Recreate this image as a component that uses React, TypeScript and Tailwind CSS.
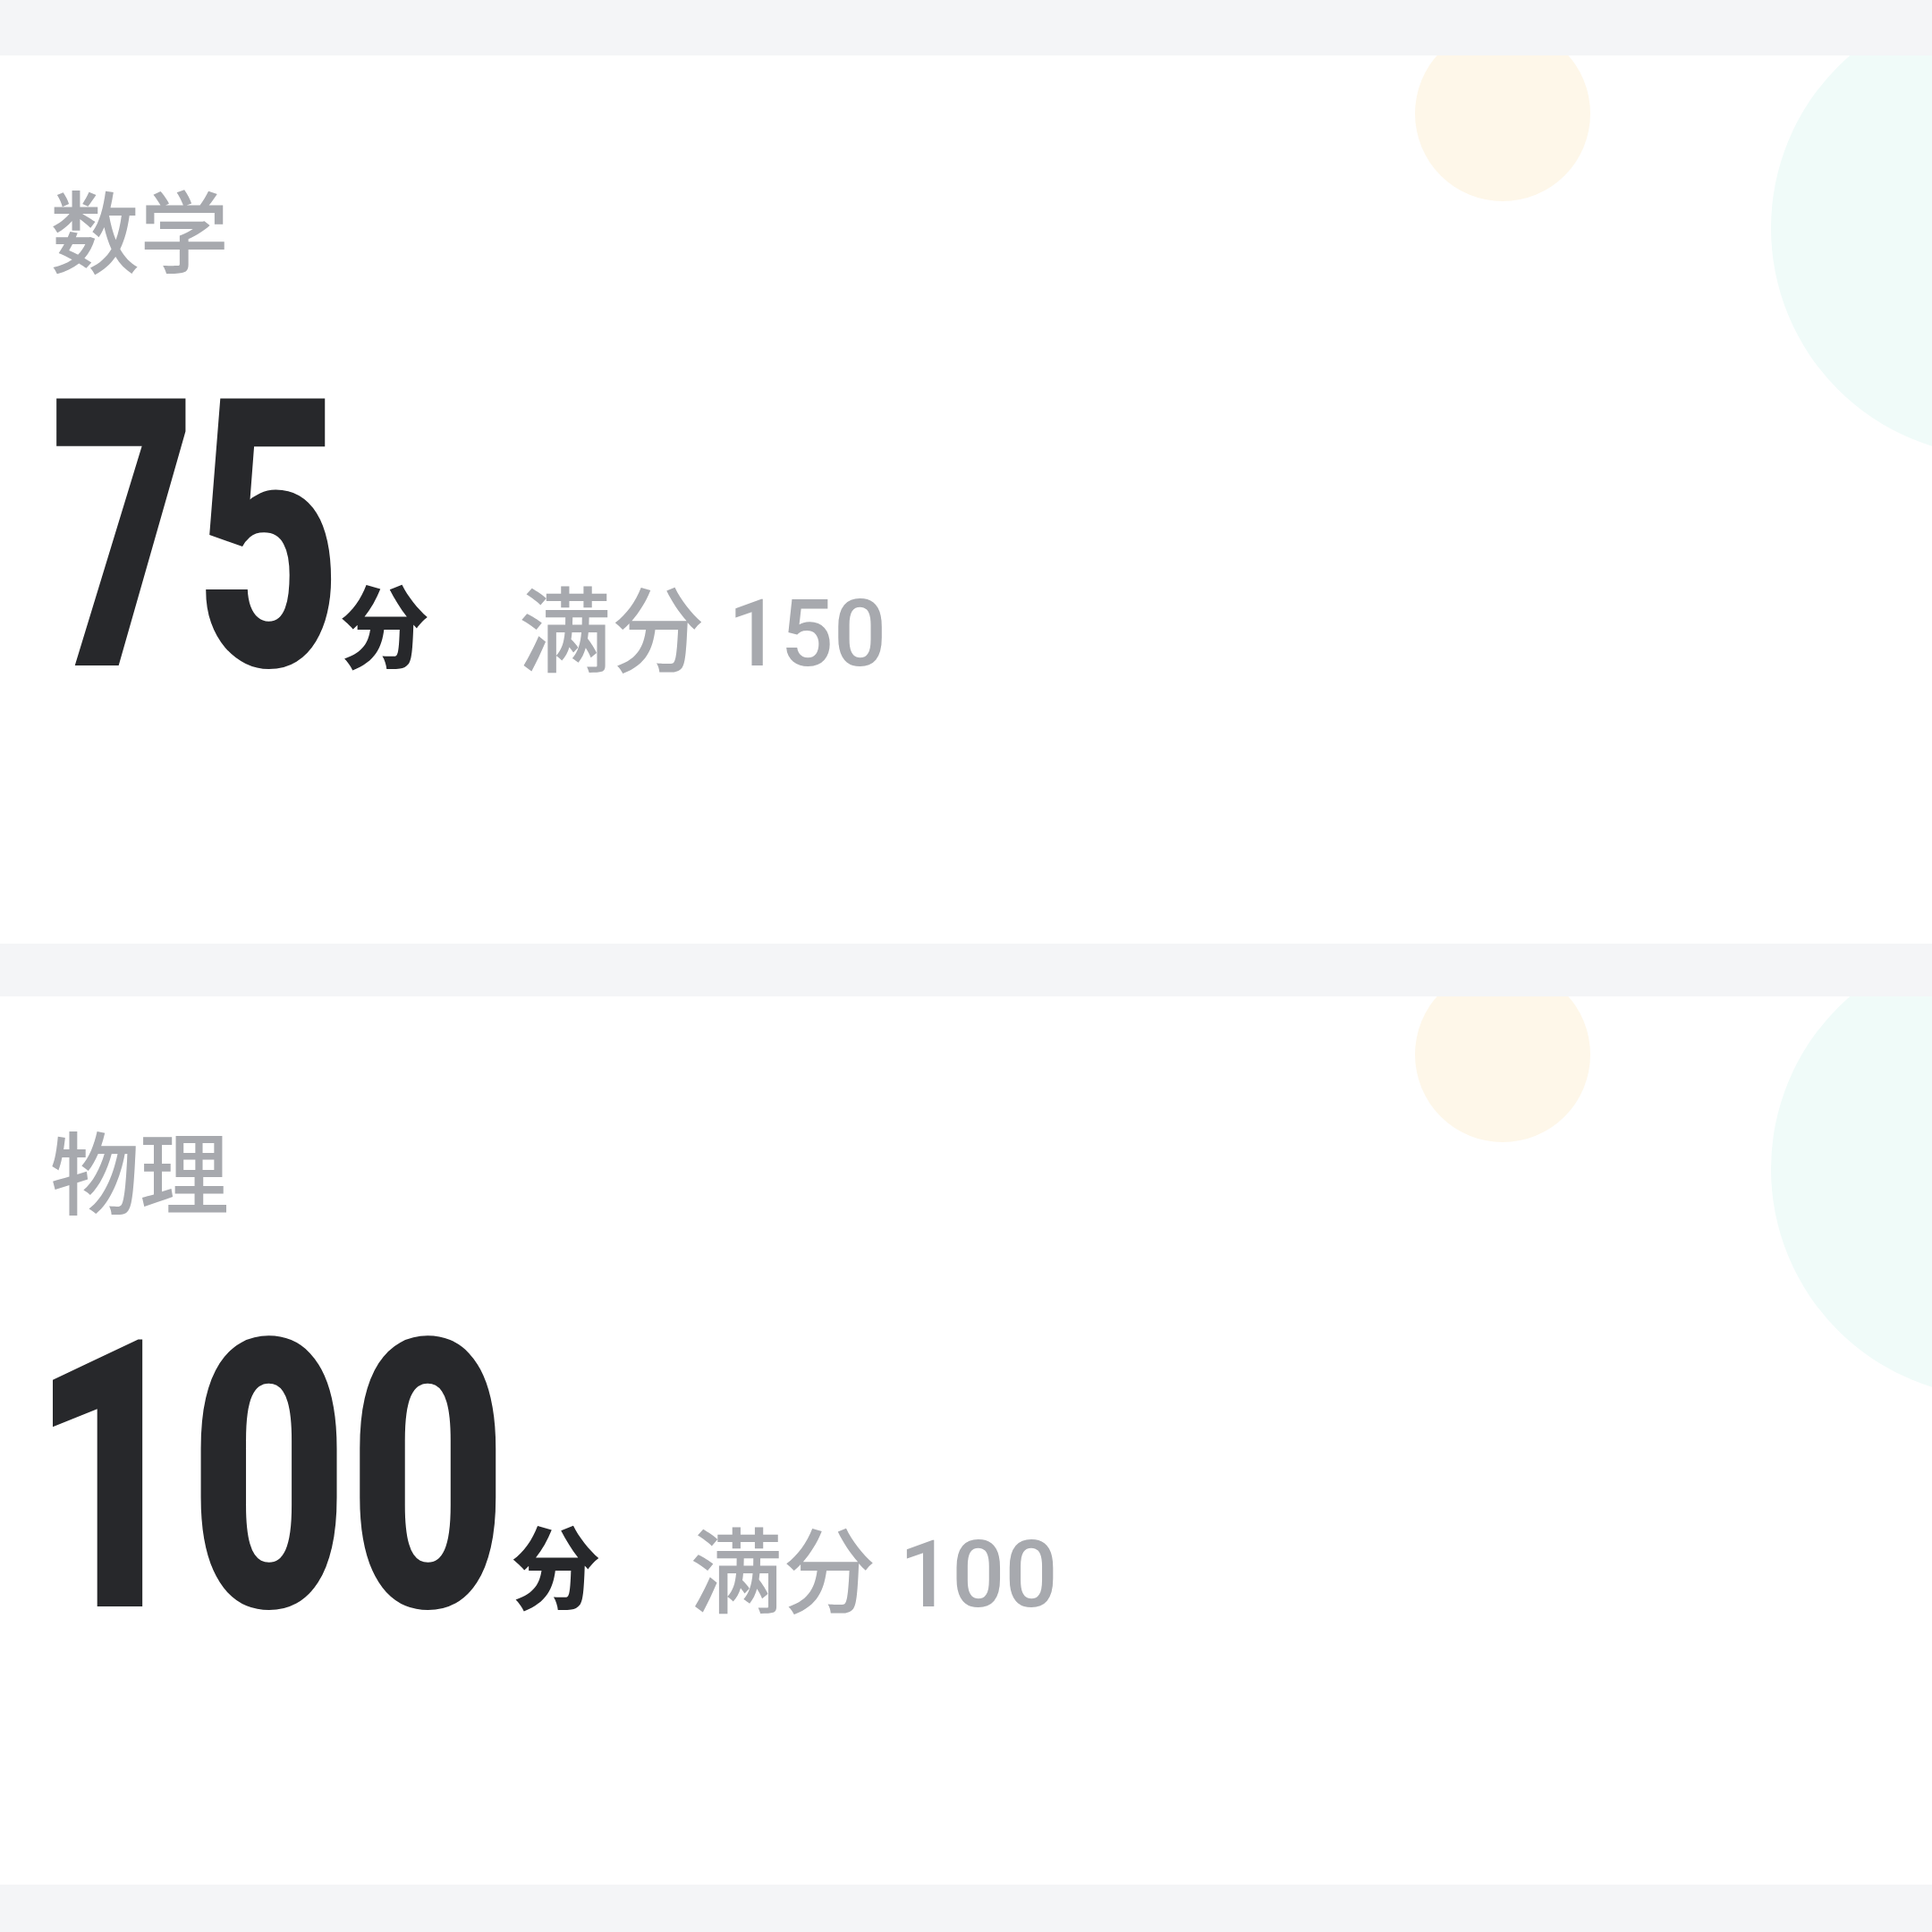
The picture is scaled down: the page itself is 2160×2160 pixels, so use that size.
import React from 'react'

type Score = {
  subject: string
  score: string
  full: string
  numClass: string
}

// the score font is a condensed face; Roboto is squeezed to match
const SCORES: Score[] = [
  { subject: '数学', score: '75', full: '150', numClass: 'scale-x-[0.67] mr-[-163px]' },
  { subject: '物理', score: '100', full: '100', numClass: 'scale-x-[0.73] ml-[-22px] mr-[-193px]' }
]

const ScoreCard: React.FC<{ item: Score }> = ({ item }) => {
  return (
    <div className="relative h-[993px] overflow-hidden bg-white pl-[56px] pt-[143px]">
      {/* decorative bubbles */}
      <div className="absolute left-[1582px] top-[-33px] h-[196px] w-[196px] rounded-full bg-[#fef7e9]" />
      <div className="absolute left-[1980px] top-[-62px] h-[510px] w-[510px] rounded-full bg-[#f0fbf9]" />

      <div className="relative flex flex-col">
        <p className="text-[100px] font-medium leading-none text-[#a7a9ae] font-['Noto_Sans_CJK_SC',sans-serif]">
          {item.subject}
        </p>
        <div className="mt-[86px] flex items-baseline">
          <span
            className={`inline-block origin-left text-[420px] font-black leading-none text-[#27282b] font-['Roboto',sans-serif] ${item.numClass}`}
          >
            {item.score}
          </span>
          <span className="relative top-[-5px] text-[100px] font-black leading-none text-[#27282b] font-['Noto_Sans_CJK_SC',sans-serif]">
            分
          </span>
          <span className="ml-[100px] text-[104px] font-medium leading-none text-[#a7a9ae] font-['Roboto','Noto_Sans_CJK_SC',sans-serif]">
            满分 {item.full}
          </span>
        </div>
      </div>
    </div>
  )
}

export default function App() {
  return (
    <div className="flex h-[2160px] w-[2160px] flex-col gap-[59px] overflow-hidden bg-[#f4f5f7] pt-[62px]">
      {SCORES.map((s) => (
        <ScoreCard key={s.subject} item={s} />
      ))}
    </div>
  )
}
